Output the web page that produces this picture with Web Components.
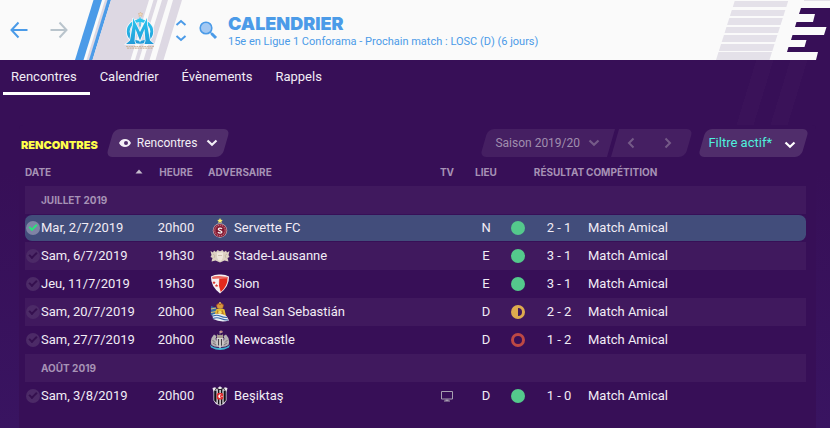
<!DOCTYPE html>
<html lang="fr">
<head>
<meta charset="utf-8">
<title>Calendrier</title>
<style>
  html, body { margin: 0; min-height: 100%; }
  body {
    background: #370f57;
    color: #f1ecf5;
    font: 13px/18px Roboto, "Liberation Sans", sans-serif;
  }
</style>
</head>
<body>
<calendar-screen></calendar-screen>

<script>
const make = (name, html, setup) => customElements.define(name, class extends HTMLElement {
  connectedCallback() {
    if (this.shadowRoot) return;
    const root = this.attachShadow({ mode: "open" });
    root.innerHTML = typeof html === "function" ? html(this) : html;
    if (setup) setup(this, root);
  }
});

/* ---------- icons ---------- */
const icons = {
  back: [20, 20, '<path d="M18.500 10H2.500M9.500 2.500L2.500 10L9.500 17.500" fill="none" stroke="currentColor" stroke-width="2"/>'],
  forward: [20, 20, '<path d="M1.500 10H17.500M10.500 2.500L17.500 10L10.500 17.500" fill="none" stroke="currentColor" stroke-width="2"/>'],
  up: [12, 8, '<path d="M1.500 6L6 2L10.500 6" fill="none" stroke="currentColor" stroke-width="2"/>'],
  down: [12, 8, '<path d="M1.500 2L6 6L10.500 2" fill="none" stroke="currentColor" stroke-width="2"/>'],
  search: [20, 20, '<circle cx="8" cy="8" r="5.800" fill="#a3c8f2" stroke="currentColor" stroke-width="1.600"/><path d="M12 12L14 14" stroke="currentColor" stroke-width="1.500"/><path d="M13.500 13.500L18 18" stroke="currentColor" stroke-width="3"/>'],
  chevron: [12, 8, '<path d="M1.500 1.500L6 5.800L10.500 1.500" fill="none" stroke="currentColor" stroke-width="2.200"/>'],
  left: [8, 12, '<path d="M6.500 1.500L2 6L6.500 10.500" fill="none" stroke="currentColor" stroke-width="2"/>'],
  right: [8, 12, '<path d="M1.500 1.500L6 6L1.500 10.500" fill="none" stroke="currentColor" stroke-width="2"/>'],
  eye: [12, 10, '<path fill-rule="evenodd" fill="currentColor" d="M0 5Q2 1 6 1T12 5Q10 9 6 9T0 5ZM7 3A2 2 0 1 0 7 7A2 2 0 1 0 7 3Z"/>'],
  sort: [8, 5, '<path d="M0.500 4.500L4 0.500L7.500 4.500Z" fill="currentColor"/>'],
  tv: [12, 11, '<path d="M.5.500H11.500V8H.5Z" fill="none" stroke="currentColor"/><path d="M4.500 8.500H7.500V9.500H9V10.500H3V9.500H4.500Z" fill="currentColor"/>'],
  win: [14, 14, '<circle cx="7" cy="7" r="7" fill="#54c98c"/>'],
  draw: [14, 14, '<circle cx="7" cy="7" r="7" fill="#dfab4e"/><path d="M7 3A4 4 0 0 1 7 11Z" fill="#3f195d"/>'],
  loss: [14, 14, '<circle cx="7" cy="7" r="5.500" fill="none" stroke="#bd4844" stroke-width="3"/>']
};
make("ui-icon", el => {
  const [w, h, body] = icons[el.getAttribute("name")];
  return `<style>:host{display:inline-flex;flex:none}svg{display:block}</style>
  <svg width="${w}" height="${h}" viewBox="0 0 ${w} ${h}" aria-hidden="true">${body}</svg>`;
});

/* ---------- club crests ---------- */
const crests = {
  servette: `<path d="M10 0l.9 1.700 1.900.2-1.400 1.300.4 1.900L10 4.200l-1.800.9.4-1.900L7.200 1.900l1.900-.2z" fill="#fff06a"/>
    <circle cx="10" cy="12.500" r="7.200" fill="#c9bcc4"/><circle cx="10" cy="12.500" r="6.600" fill="#8c1f38"/>
    <circle cx="10" cy="12.500" r="5.200" fill="none" stroke="#d7a5ad" stroke-width=".9" stroke-dasharray="1 1"/>
    <circle cx="10" cy="12.500" r="3.800" fill="#7c1730"/>
    <path d="M12 10.900C11 9.700 8.300 9.900 8.300 11.300S11.900 12.500 11.900 14 9 15.500 7.900 14.200" fill="none" stroke="#f7eff0" stroke-width="1.300"/>`,
  stade: `<path d="M.5 5L3 6.500 4 4.500 6 6 7.500 4 10 5.200 12.500 4 14 6 16 4.500 17 6.500 19.500 5 18.500 9 19.500 11 17.500 12 18.500 15.500 14.500 14.500 10 16.500 5.500 14.500 1.500 15.500 2.500 12 .5 11 1.500 9z" fill="#ddd3c3"/>
    <path d="M7 6.500h6v4.500Q12.500 14 10 15 7.500 14 7 11z" fill="#efe8dc"/>
    <path d="M3 8l2 1.500L4 12M17 8l-2 1.500 1 2.500M8 9.500h4" fill="none" stroke="#c0b299" stroke-width=".7"/>`,
  sion: `<path d="M1 2.500Q5 .2 10 .5 15 .2 19 2.500 19.500 12 10 19.500.5 12 1 2.500z" fill="#f5f1f3"/>
    <path d="M9 4.500L17.500 3.800Q18 12 10.500 18.200Q7.500 12 9 4.500z" fill="#e3291d"/>
    <path d="M2 3Q6 1.500 9.500 2L18 3 17.500 4.500 9 4.500 2.500 5z" fill="#e86a62"/>
    <path d="M4 7l.6 1 1.100.1-.8.8.2 1.100L4 9.500l-1 .5.200-1.100-.8-.8L3.400 8zM6.500 10l.6 1 1.100.1-.8.8.2 1.100-1.100-.5-1 .5.200-1.100-.8-.8 1-.1z" fill="#d83a34"/>
    <path d="M8.800 5Q7.500 12 10.300 18" fill="none" stroke="#fff" stroke-width=".8"/>`,
  real: `<path d="M6 3Q10-1.500 14 3L13 6H7z" fill="#a9572c"/><path d="M7 3.500L8.500 2 10 3.300 11.500 2 13 3.500 12.500 6h-5z" fill="#d99a3d"/>
    <path d="M10 0v2M9.200.8h1.600" stroke="#efd369" stroke-width=".8"/>
    <path d="M1 4L6.500 6 5.500 16 .8 13z" fill="#366aa3"/><path d="M1 7l5-1M1 10.500l5-1" stroke="#d8c172" stroke-width="1.200"/>
    <path d="M6 7.500Q10 5 14.500 7.500L16 14H4.500z" fill="#e6bc32"/>
    <path d="M7.500 8l2 2.500 3-2.500 1.500 4.500H6.500z" fill="#bd7c28"/><circle cx="10" cy="10.500" r="1.800" fill="#f2da66"/>
    <path d="M2.500 12.500Q10 10.500 16.500 14L19 18.500Q11 21 3 17z" fill="#e9eef5"/>
    <path d="M3 14Q7 12.500 10 14T17 15.500M3 16.500Q7 15 10.500 16.500T18 18" fill="none" stroke="#3468aa" stroke-width="1.200"/>`,
  newcastle: `<path d="M0 14.500Q3 18 10 18t10-3.500L19 17.500Q14 20 10 20T1 17.500z" fill="#3fb6d3"/>
    <path d="M1.500 15Q-.5 9 4 4.500L6.500 6 5.500 9 8 13v4Q4 17 1.500 15zM18.500 15Q20.500 9 16 4.500L13.500 6l1 3L12 13v4q4 0 6.500-2z" fill="#b5b1b2"/>
    <path d="M2.500 10L5 12.500M3 13l3 2M17.500 10L15 12.500M17 13l-3 2" stroke="#736b74" stroke-width=".9"/>
    <path d="M6.500 8h7v5.500Q12.500 17 10 18.200 7.500 17 6.500 13.500z" fill="#d9d5d4"/><path d="M7.900 9h1.200v7L7.900 15zM10.900 9h1.200v6l-1.200 1.500z" fill="#4a444c"/>
    <path d="M7 8V4.500h1V5h4v-.5h1V8z" fill="#a79b90"/><path d="M10 4.500V1M10 1h2.200v1.500H10z" fill="#c9534f" stroke="#cdbcb6" stroke-width=".6"/>`,
  besiktas: `<path d="M2.500 2L5 1.200 7 2.500 10 .3 13 2.500 15 1.200 17.500 2 16.500 6v8.500L14 18l-4 1.800L6 18l-2.500-3.500V6z" fill="#ece8ee"/>
    <path d="M4.200 4.500h2.300V17L4.200 14.500zM7.800 3h1.600v16L7.800 18zM10.800 3h1.600v15l-1.600 1zM13.600 4.500h2.200v10L13.600 17z" fill="#15121a"/>
    <path d="M5 3.500l2-1 3 1.200 3-1.200 2 1" fill="none" stroke="#26202b" stroke-width="1"/>
    <rect x="6.800" y="7" width="6.400" height="6.400" rx="1.500" fill="#e22b30"/><path d="M10.900 8.500A1.900 1.900 0 1 0 10.900 12 2.200 2.200 0 0 1 10.900 8.500z" fill="#fff"/><circle cx="12" cy="10.300" r=".6" fill="#fff"/>`
};
make("club-crest", el => `<style>:host{display:block;flex:none}svg{display:block}</style>
  <svg width="20" height="20" viewBox="0 0 20 20" role="img" aria-label="Écusson">${crests[el.getAttribute("club")]}</svg>`);

/* ---------- top bar ---------- */
make("club-banner", `<style>:host{display:block;flex:none}svg{display:block}</style>
<svg width="107" height="60" viewBox="0 0 107 60" role="img" aria-label="Olympique de Marseille">
  <defs><linearGradient id="g" x1="0" y1="0" x2="0" y2="1"><stop offset="0" stop-color="#2cc5ee"/><stop offset="1" stop-color="#219bd8"/></linearGradient></defs>
  <path d="M18.500 0H27L8.500 60H0z" fill="#4b9be8"/>
  <path d="M30 0H33L14.500 60H11.500z" fill="#ddd8e3"/>
  <path d="M32.500 0H36L17.500 60H14z" fill="#4b9be8"/>
  <path d="M36 0H74L55.500 60H17.500zM78.500 0H82.500L64 60H60zM87 0H93L74.500 60H68.500zM98 0H107L88.500 60H80.500z" fill="#ddd8e3"/>
  <path d="M65.500 12l.8 1.500 1.700.2-1.300 1.100.4 1.700-1.600-.8-1.600.8.4-1.700-1.300-1.100 1.700-.2z" fill="#f0d9b9" stroke="#cba77e" stroke-width=".4"/>
  <ellipse cx="65" cy="31.500" rx="12" ry="11" fill="none" stroke="#f4f6fa" stroke-width="4.200"/>
  <ellipse cx="65" cy="31.500" rx="11.800" ry="10.800" fill="none" stroke="url(#g)" stroke-width="2.800"/>
  <path d="M58 18L65 32 72 18 72 24 75 40.500 79 44H69.500L70.500 41 69.500 29 65 40.500 60.500 29 59.500 41 60.500 44H51L55 40.500 58 24z" fill="url(#g)" stroke="#f4f6fa" stroke-width="1.600" paint-order="stroke"/>
  <path d="M62.500 19.500h5M65 17.500v9" stroke="#2cc5ee" stroke-width="1.300"/>
  <path d="M51 46.500H79M52 48.200H78" stroke="#cdb6a0" stroke-width="1.200" stroke-dasharray="2 .6"/>
</svg>`);

make("league-art", `<style>:host{display:block;flex:none}svg{display:block}</style>
<svg width="114" height="60" viewBox="0 0 114 60" aria-hidden="true">
  <defs><clipPath id="c"><path d="M19 0H72.500L53.500 60H0z"/></clipPath></defs>
  <g clip-path="url(#c)" fill="#e4e1e9"><path d="M0 1H80V7H0zM0 10H80V16H0zM0 18H80V25H0zM0 27H80V33H0zM0 35H80V42H0zM0 44H80V51H0zM0 52H80V60H0z"/></g>
  <path d="M88 0H114V1H88z" fill="#e4e1e9"/>
  <path d="M85 8H114V60H100L102 52H71L72.500 47H88.500L90.500 40H75L76.500 35H108L110.500 27H79L80.500 22H97L99 14H83z" fill="#370f57"/>
</svg>`);

make("top-bar", `<style>
  :host{display:flex;align-items:center;height:60px;background:#fafafa;color:#4b9be8;overflow:hidden}
  button{border:0;background:none;padding:0;color:inherit;display:flex;font:inherit}
  .history{display:flex;gap:20px;padding:0 6px 0 9px}
  .history button:last-child{color:#b9c4cc}
  .step{display:flex;flex-direction:column;gap:7px;margin-left:-7px}
  .search{margin:0 10px 0 11px}
  .titles{flex:1;min-width:0;white-space:nowrap}
  h1{margin:0;padding-top:3px;font:900 18px/20px Inter,"Liberation Sans",sans-serif}
  p{margin:0;font-size:11px;line-height:16px}
</style>
<nav class="history" aria-label="Historique"><button aria-label="Précédent"><ui-icon name="back"></ui-icon></button><button aria-label="Suivant"><ui-icon name="forward"></ui-icon></button></nav>
<club-banner></club-banner>
<div class="step"><button aria-label="Club précédent"><ui-icon name="up"></ui-icon></button><button aria-label="Club suivant"><ui-icon name="down"></ui-icon></button></div>
<button class="search" aria-label="Rechercher"><ui-icon name="search"></ui-icon></button>
<div class="titles"><h1><slot name="title"></slot></h1><p><slot name="subtitle"></slot></p></div>
<league-art></league-art>`);

/* ---------- tabs ---------- */
make("tab-link", el => `<style>
  :host{display:block}
  a{display:block;padding:8px 13px 6px 8px;color:#f1ecf5;text-decoration:none;border-bottom:3px solid transparent}
  :host([current]) a{border-color:#fff}
</style><a href="#"${el.hasAttribute("current") ? ' aria-current="page"' : ""}><slot></slot></a>`);
make("tab-bar", `<style>:host{display:block}nav{display:flex;gap:2px;padding:0 3px}</style><nav aria-label="Sections"><slot></slot></nav>`);

/* ---------- slanted controls ---------- */
make("slant-box", `<style>
  :host{position:relative;isolation:isolate;display:flex;align-items:center;height:28px;box-sizing:border-box;--fill:#502d6b;--round:6px}
  :host::before{content:"";position:absolute;inset:0;z-index:-1;background:var(--fill);border-radius:var(--round);transform:skewX(-16deg)}
</style><slot></slot>`);

/* ---------- fixtures ---------- */
const rows = [
  { group: "JUILLET 2019" },
  { date: "Mar, 2/7/2019", time: "20h00", club: "servette", name: "Servette FC", place: "N", out: "win", score: "2 - 1", tone: "on" },
  { date: "Sam, 6/7/2019", time: "19h30", club: "stade", name: "Stade-Lausanne", place: "E", out: "win", score: "3 - 1", tone: "band" },
  { date: "Jeu, 11/7/2019", time: "19h30", club: "sion", name: "Sion", place: "E", out: "win", score: "3 - 1" },
  { date: "Sam, 20/7/2019", time: "20h00", club: "real", name: "Real San Sebastián", place: "D", out: "draw", score: "2 - 2", tone: "band" },
  { date: "Sam, 27/7/2019", time: "20h00", club: "newcastle", name: "Newcastle", place: "D", out: "loss", score: "1 - 2" },
  { group: "AOÛT 2019" },
  { date: "Sam, 3/8/2019", time: "20h00", club: "besiktas", name: "Beşiktaş", place: "D", out: "win", score: "1 - 0", tv: true }
];
const rowHtml = r => r.group
  ? `<tr class="band"><td></td><th colspan="8" scope="rowgroup">${r.group}</th></tr>`
  : `<tr class="${r.tone || ""}"><td class="c"><input type="checkbox" aria-label="${r.date}" ${r.tone === "on" ? "checked" : ""}></td>
    <td>${r.date}</td><td class="c">${r.time}</td>
    <td><span class="team"><club-crest club="${r.club}"></club-crest>${r.name}</span></td>
    <td class="c i">${r.tv ? '<ui-icon name="tv"></ui-icon>' : ""}</td><td class="c">${r.place}</td>
    <td class="c i"><ui-icon name="${r.out}"></ui-icon></td><td class="c">${r.score}</td><td class="last">Match Amical</td></tr>`;

make("fixture-table", () => `<style>
  :host{display:block}
  table{width:100%;table-layout:fixed;border-collapse:separate;border-spacing:0}
  th,td{padding:0;height:28px;text-align:left;font-weight:400;white-space:nowrap;vertical-align:middle;box-sizing:border-box}
  th{color:#a692b5;font:700 10px/14px Inter,"Liberation Sans",sans-serif}
  thead th{height:27px;padding-bottom:2px}
  .c{text-align:center}
  .i{line-height:0;color:#a79fb0}
  .date{display:flex;justify-content:space-between;align-items:center;padding-right:5px}
  .date ui-icon{color:#c5bccd}
  thead .adv{padding-left:4px}
  .team{display:flex;align-items:center;gap:4px;padding-left:6px}
  .last{padding-left:2px}
  .band>*{background:#40195e}
  .on td{background:#424d7b;border:solid #370f57;border-width:1px 0}
  .on td:first-child{border-radius:7px 0 0 7px}
  .on td:last-child{border-radius:0 7px 7px 0}
  input{appearance:none;display:block;position:relative;margin:0 auto;width:14px;height:14px;border-radius:50%;background:#4c2a67;color:#35104f}
  input::before{content:"";position:absolute;left:3px;top:3px;width:6px;height:3px;border:solid currentColor;border-width:0 0 2px 2px;transform:rotate(-45deg)}
  input:checked{background:#7f83a5;color:#2be47c}
</style>
<table>
  <colgroup><col style="width:16px"><col style="width:107px"><col style="width:56px"><col style="width:222px"><col style="width:42px"><col style="width:36px"><col style="width:28px"><col style="width:54px"><col></colgroup>
  <thead><tr><th colspan="2" aria-sort="ascending"><span class="date">DATE<ui-icon name="sort"></ui-icon></span></th><th class="c">HEURE</th><th class="adv">ADVERSAIRE</th><th class="c">TV</th><th class="c">LIEU</th><th></th><th class="c">RÉSULTAT</th><th>COMPÉTITION</th></tr></thead>
  <tbody>${rows.map(rowHtml).join("")}</tbody>
</table>`);

make("fixture-panel", `<style>
  :host{display:block;margin:0 14px 0 19px;padding:4px 0 17px;background:#370f57;border-radius:4px 4px 0 0}
  header{display:flex;align-items:center;padding:0 11px 0 2px}
  h2{margin:4px 12px 0 0;color:#ffff4a;font:900 11px/16px Inter,"Liberation Sans",sans-serif}
  select,button{appearance:none;border:0;background:none;padding:0;margin:0;color:inherit;font:12px/18px Roboto,"Liberation Sans",sans-serif}
  button{display:flex;align-items:center}
  .view{padding:0 8px 0 9px;gap:6px;color:#f3eff6}
  .view select{width:63px}
  .season,.pager{--fill:#451f62;color:#a08eae}
  .season{margin-left:auto;padding:0 11px;gap:5px;--round:6px 0 0 6px}
  .season ui-icon,.pager{color:#755a88}
  .season select{width:88px}
  .pager{margin:0 13px 0 4px;padding:0 17px 0 12px;gap:29px;--round:0 6px 6px 0}
  .filter{padding:0 9px 0 6px}
  .filter button{color:#4ff0dd;font-size:13px;gap:12px}
  .filter ui-icon{color:#fff;padding-top:3px}
  fixture-table{margin:2px 10px 0 6px}
</style>
<header>
  <h2>RENCONTRES</h2>
  <slant-box class="view"><ui-icon name="eye"></ui-icon><select aria-label="Vue"><option>Rencontres</option></select><ui-icon name="chevron"></ui-icon></slant-box>
  <slant-box class="season"><select aria-label="Saison"><option>Saison 2019/20</option></select><ui-icon name="chevron"></ui-icon></slant-box>
  <slant-box class="pager"><button aria-label="Saison précédente"><ui-icon name="left"></ui-icon></button><button aria-label="Saison suivante"><ui-icon name="right"></ui-icon></button></slant-box>
  <slant-box class="filter"><button>Filtre actif*<ui-icon name="chevron"></ui-icon></button></slant-box>
</header>
<fixture-table></fixture-table>`);

make("calendar-screen", `<style>
  :host{display:flex;flex-direction:column;min-height:100vh}
  main{flex:1;display:flex;flex-direction:column;gap:30px;background:
    linear-gradient(107deg,transparent 0 89%,#3a1259 89% 91%,transparent 91% 93%,#3a1259 93% 95%,transparent 95%) 0 0/100% 65px no-repeat,
    linear-gradient(#370f57 0 30%,#391461 100%)}
  fixture-panel{flex:1}
</style>
<top-bar><span slot="title">CALENDRIER</span><span slot="subtitle">15e en Ligue 1 Conforama - Prochain match : LOSC (D) (6 jours)</span></top-bar>
<main>
  <tab-bar><tab-link current>Rencontres</tab-link><tab-link>Calendrier</tab-link><tab-link>Évènements</tab-link><tab-link>Rappels</tab-link></tab-bar>
  <fixture-panel></fixture-panel>
</main>`);
</script>
</body>
</html>
